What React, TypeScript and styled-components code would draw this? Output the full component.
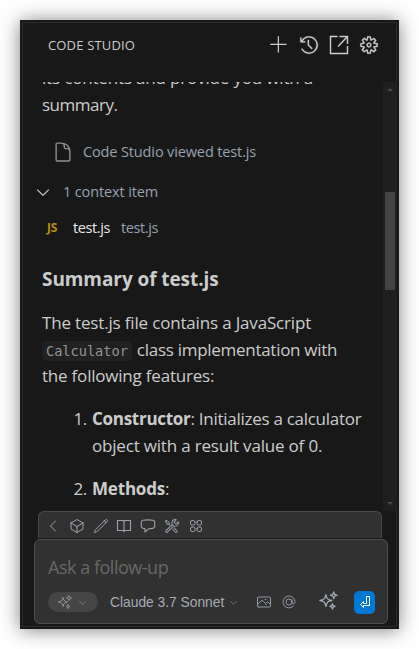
import React from 'react';
import styled, { createGlobalStyle } from 'styled-components';
import { VscAdd, VscHistory, VscChevronDown, VscTools, VscGear } from 'react-icons/vsc';
import {
  HiOutlineDocument,
  HiOutlineCube,
  HiOutlinePencil,
  HiOutlineChevronLeft,
  HiOutlineSquares2X2,
  HiOutlinePhoto,
  HiOutlineAtSymbol,
  HiOutlineSparkles,
} from 'react-icons/hi2';

const Global = createGlobalStyle`
  * { box-sizing: border-box; }
  body { margin: 0; background: #fff; overflow: hidden; }
`;

const Page = styled.div`
  height: 649px;
  padding: 20px;
  font-family: 'Open Sans', 'Noto Sans', sans-serif;
  color: #cccccc;
`;

const Panel = styled.section`
  display: flex;
  flex-direction: column;
  width: 379px;
  height: 609px;
  padding: 2px 1px 0 2px;
  background: #181818;
  box-shadow: 0 1px 18px rgba(0, 0, 0, 0.5), inset 0 3px 0 -1px #181818, inset 0 0 0 2px #181818,
    inset 0 0 0 3px #2b2b2b;
`;

const Header = styled.header`
  display: flex;
  align-items: center;
  justify-content: space-between;
  height: 46px;
  flex: none;
  padding: 0 19px 0 26px;
`;

const Title = styled.h1`
  margin: 0;
  font-size: 13px;
  font-weight: 400;
  letter-spacing: 0.16px;
`;

const Actions = styled.div`
  display: flex;
  align-items: center;
  gap: 10px;
  svg { width: 20px; height: 20px; display: block; stroke-width: 0.2px; }
  svg:first-child { stroke-width: 0; }
`;

const Body = styled.main`
  display: flex;
  height: 429px;
  margin-top: 14px;
  flex: none;
`;

const Messages = styled.div`
  flex: 1;
  min-width: 0;
  overflow: hidden;
  padding-left: 20px;
`;

const Scrollbar = styled.div`
  display: flex;
  flex-direction: column;
  align-items: center;
  width: 14px;
  flex: none;
  margin-right: 1px;
  background: #1f1f1f;
`;

const Arrow = styled.i<{ $down?: boolean }>`
  margin-top: ${(p) => (p.$down ? '212px' : '6px')};
  border: 3px solid transparent;
  border-top-width: ${(p) => (p.$down ? '3px' : '0')};
  border-bottom-width: ${(p) => (p.$down ? '0' : '3px')};
  border-${(p) => (p.$down ? 'top' : 'bottom')}-color: #4b4b4b;
`;

const Thumb = styled.div`
  width: 10px;
  height: 98px;
  margin-top: 101px;
  background: #434343;
`;

const Paragraph = styled.p<{ $top: number }>`
  margin: ${(p) => p.$top}px 0 0;
  font-size: 17px;
  line-height: 26.6px;
`;

const Line = styled.span<{ $track: number }>`
  display: block;
  height: 26.6px;
  white-space: nowrap;
  letter-spacing: ${(p) => p.$track}px;
`;

const MetaRow = styled.div<{ $indent: number; $top: number; $gap: number }>`
  display: flex;
  align-items: center;
  gap: ${(p) => p.$gap}px;
  height: 20px;
  margin: ${(p) => p.$top}px 0 0 ${(p) => p.$indent}px;
  font-size: 14.5px;
  line-height: 20px;
  white-space: nowrap;
  letter-spacing: -0.13px;
  color: #98a2ae;
  svg { flex: none; }
`;

const FileName = styled.span<{ $strong?: boolean }>`
  letter-spacing: -0.4px;
  color: ${(p) => (p.$strong ? '#e8e8e8' : '#98a2ae')};
`;

const JsBadge = styled.span`
  width: 15px;
  font: 700 12px/20px 'Open Sans', sans-serif;
  color: #b8900c;
`;

const Heading = styled.h2`
  margin: 28px 0 0;
  font-size: 19px;
  line-height: 26px;
  letter-spacing: -0.08px;
  font-weight: 700;
  white-space: nowrap;
`;

const Code = styled.code`
  display: inline-block;
  height: 20px;
  margin-right: 5px;
  padding: 0 4px;
  border-radius: 5px;
  background: #212121;
  color: #949494;
  font: 13.6px/20px 'DejaVu Sans Mono', monospace;
  letter-spacing: 0;
`;

const List = styled.ol`
  margin: 16px 0 0;
  padding: 0;
  list-style: none;
  font-size: 17px;
  line-height: 26.6px;
`;

const Item = styled.li`
  display: grid;
  grid-template-columns: 50px 1fr;
  margin-bottom: 16.4px;
`;

const Marker = styled.span`
  padding-right: 5px;
  text-align: right;
  letter-spacing: -0.3px;
`;

const Toolbar = styled.div`
  display: flex;
  align-items: center;
  gap: 7.8px;
  height: 27px;
  flex: none;
  margin: 0 16px 0 16px;
  padding: 2px 0 0 6px;
  border: 1px solid #4a4a4a;
  border-bottom: 0;
  border-radius: 6px 6px 0 0;
  background: #313131;
  color: #9ca1ad;
  svg { width: 16px; height: 16px; display: block; }
`;

const Composer = styled.div`
  height: 85px;
  flex: none;
  margin: 1px 10px 0 12px;
  padding: 13px 12px 0 13px;
  border: 1px solid #4f4f4f;
  border-radius: 6px;
  background: #313131;
`;

const Placeholder = styled.div`
  font-size: 18px;
  line-height: 28px;
  letter-spacing: -0.48px;
  color: #686868;
`;

const Controls = styled.div`
  display: flex;
  align-items: center;
  height: 24px;
  margin-top: 9px;
  color: #9298a4;
  svg { display: block; flex: none; }
`;

const Mode = styled.div`
  display: flex;
  align-items: center;
  gap: 4px;
  width: 50px;
  height: 20px;
  padding-left: 9px;
  border-radius: 10px;
  background: #454545;
`;

const Model = styled.div`
  display: flex;
  align-items: center;
  gap: 4px;
  width: 155px;
  padding-left: 12px;
  font: 13.8px 'Liberation Sans', sans-serif;
  white-space: nowrap;
  color: #a4abb6;
  svg { color: #858a93; }
`;

const Tools = styled.div`
  display: flex;
  align-items: center;
  flex: 1;
  gap: 9px;
  padding-left: 3px;
`;

const Enhance = styled.div`
  margin: -4px 15px 0 0;
  color: #a7adb9;
`;

const Send = styled.button`
  display: grid;
  place-items: center;
  width: 21px;
  height: 23px;
  padding: 0;
  border: 0;
  border-radius: 5px;
  background: #0078d4;
`;

const OpenExternalIcon = () => (
  <svg viewBox="0 0 20 20" fill="none" stroke="currentColor">
    <path strokeWidth="1.4" d="M8.500 1.500H1.500v17h17V11M10.500 1.500h8V9M18.500 1.500 9 11.500" />
  </svg>
);

const BookIcon = () => (
  <svg viewBox="0 0 16 16" fill="none" stroke="currentColor" strokeWidth="1.1">
    <path d="M8 3.5 7 2.5H1.5v10H7l1 1 1-1h5.5v-10H9zM8 3.5v10" />
  </svg>
);

const CommentIcon = () => (
  <svg viewBox="0 0 16 16" fill="none" stroke="currentColor" strokeWidth="1.1" strokeLinejoin="round">
    <path d="M3.2 2.2C6.4 1.7 9.6 1.7 12.8 2.2q1.9.3 1.9 2.1v4q0 1.8-1.9 2.1-2.1.3-4.2.4L5 14v-3.4l-1.8-.2Q1.3 10.1 1.3 8.3v-4Q1.3 2.500 3.2 2.2z" />
  </svg>
);

export default function App() {
  return (
    <Page>
      <Global />
      <Panel>
        <Header>
          <Title>CODE STUDIO</Title>
          <Actions>
            <VscAdd />
            <VscHistory stroke="currentColor" />
            <OpenExternalIcon />
            <VscGear stroke="currentColor" />
          </Actions>
        </Header>
        <Body>
          <Messages>
            <Paragraph $top={-17}>
              <Line $track={-0.17}>its contents and provide you with a</Line>
              <Line $track={-0.5}>summary.</Line>
            </Paragraph>
            <MetaRow $top={23.8} $indent={10} $gap={9}>
              <HiOutlineDocument size={22} strokeWidth={1.5} color="#8b9098" />
              Code Studio viewed test.js
            </MetaRow>
            <MetaRow $top={20} $indent={-9} $gap={10}>
              <VscChevronDown size={20} color="#cfcfcf" />
              1 context item
            </MetaRow>
            <MetaRow $top={16} $indent={5} $gap={11}>
              <JsBadge>JS</JsBadge>
              <FileName $strong>test.js</FileName>
              <FileName>test.js</FileName>
            </MetaRow>
            <Heading>Summary of test.js</Heading>
            <Paragraph $top={18.2}>
              <Line $track={-0.17}>The test.js file contains a JavaScript</Line>
              <Line $track={-0.28}>
                <Code>Calculator</Code>class implementation with
              </Line>
              <Line $track={-0.21}>the following features:</Line>
            </Paragraph>
            <List>
              <Item>
                <Marker>1.</Marker>
                <div>
                  <Line $track={-0.28}>
                    <b>Constructor</b>: Initializes a calculator
                  </Line>
                  <Line $track={-0.19}>object with a result value of 0.</Line>
                </div>
              </Item>
              <Item>
                <Marker>2.</Marker>
                <Line $track={-0.19}>
                  <b>Methods</b>:
                </Line>
              </Item>
            </List>
          </Messages>
          <Scrollbar>
            <Arrow />
            <Thumb />
            <Arrow $down />
          </Scrollbar>
        </Body>
        <Toolbar>
          <HiOutlineChevronLeft />
          <HiOutlineCube />
          <HiOutlinePencil />
          <BookIcon />
          <CommentIcon />
          <VscTools />
          <HiOutlineSquares2X2 />
        </Toolbar>
        <Composer>
          <Placeholder>Ask a follow-up</Placeholder>
          <Controls>
            <Mode>
              <HiOutlineSparkles size={16} />
              <VscChevronDown size={11} />
            </Mode>
            <Model>
              Claude 3.7 Sonnet
              <VscChevronDown size={11} />
            </Model>
            <Tools>
              <HiOutlinePhoto size={16} />
              <HiOutlineAtSymbol size={16} />
            </Tools>
            <Enhance>
              <HiOutlineSparkles size={21} />
            </Enhance>
            <Send aria-label="Send">
              <svg width="12" height="14" viewBox="0 0 12 14" fill="none" stroke="#fff" strokeWidth="1">
                <path d="M7.5 1.5h3v9h-6v2L1.5 9.5l3-3v2h3z" />
              </svg>
            </Send>
          </Controls>
        </Composer>
      </Panel>
    </Page>
  );
}
